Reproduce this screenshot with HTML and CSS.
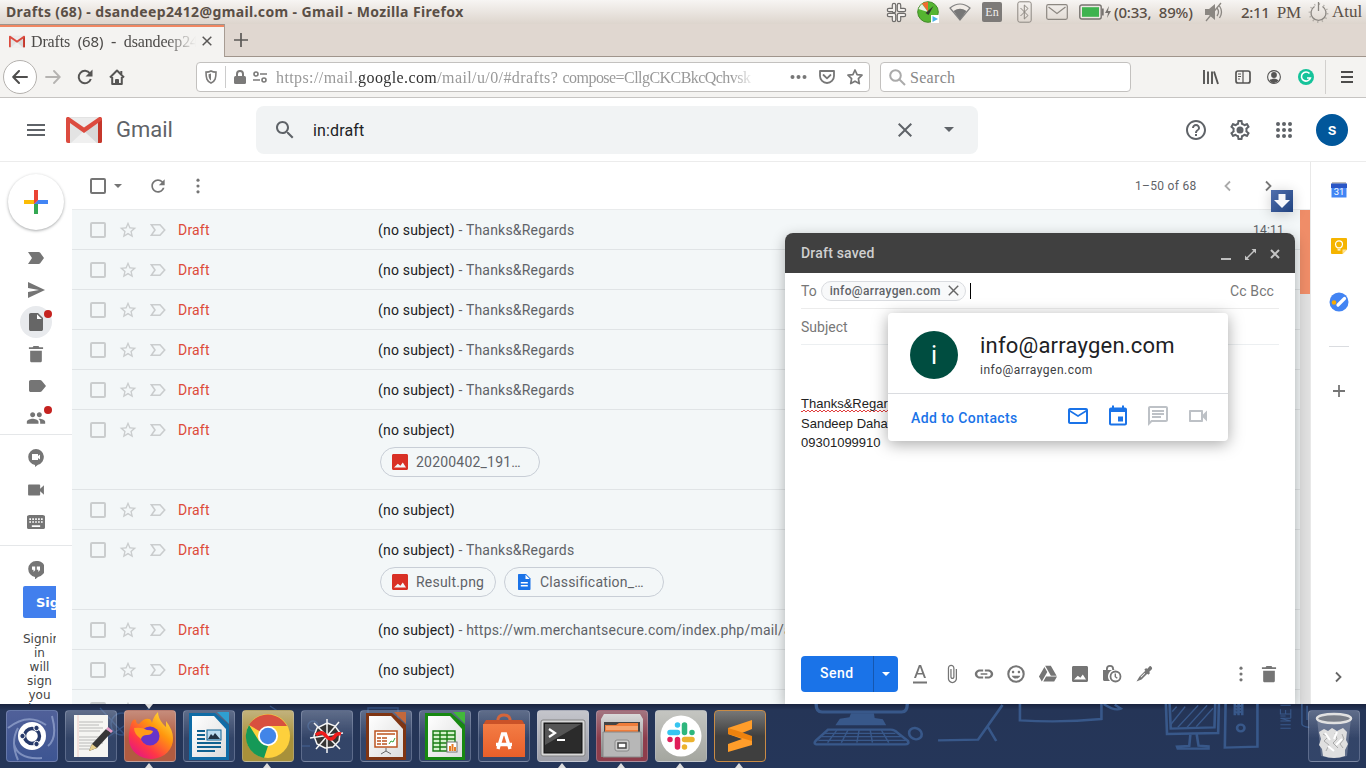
FILE: index.html
```html
<!DOCTYPE html>
<html lang="en">
<head>
<meta charset="utf-8">
<title>Drafts (68) - dsandeep2412@gmail.com - Gmail</title>
<link rel="stylesheet" href="styles.css">
</head>
<body>
<svg class="defs" width="0" height="0">
  <defs>
    <symbol id="star" viewBox="0 0 24 24"><path d="M22 9.24l-7.19-.62L12 2 9.19 8.63 2 9.24l5.46 4.73L5.82 21 12 17.27 18.18 21l-1.63-7.03L22 9.24zM12 15.4l-3.76 2.27 1-4.28-3.32-2.88 4.38-.38L12 6.1l1.71 4.04 4.38.38-3.32 2.88 1 4.28L12 15.4z"/></symbol>
    <symbol id="imp" viewBox="0 0 16 16"><path d="M1.3 2.7H10L14.7 8 10 13.3H1.3L5 8z" fill="none" stroke="currentColor" stroke-width="1.6"/></symbol>
    <symbol id="box" viewBox="0 0 16 16"><rect x="1" y="1" width="14" height="14" rx="1" fill="none" stroke="currentColor" stroke-width="2"/></symbol>
    <symbol id="search" viewBox="0 0 24 24"><path d="M15.5 14h-.79l-.28-.27C15.41 12.59 16 11.11 16 9.5 16 5.91 13.09 3 9.5 3S3 5.91 3 9.5 5.91 16 9.5 16c1.61 0 3.09-.59 4.23-1.57l.27.28v.79l5 4.99L20.49 19l-4.99-5zm-6 0C7.01 14 5 11.99 5 9.5S7.01 5 9.5 5 14 7.01 14 9.5 11.99 14 9.5 14z"/></symbol>
    <symbol id="close" viewBox="0 0 24 24"><path d="M19 6.41L17.59 5 12 10.59 6.41 5 5 6.41 10.59 12 5 17.59 6.41 19 12 13.41 17.59 19 19 17.59 13.41 12z"/></symbol>
    <symbol id="refresh" viewBox="0 0 24 24"><path d="M17.65 6.35C16.2 4.9 14.21 4 12 4c-4.42 0-7.99 3.58-7.99 8s3.57 8 7.99 8c3.73 0 6.84-2.55 7.73-6h-2.08c-.82 2.33-3.04 4-5.65 4-3.31 0-6-2.69-6-6s2.69-6 6-6c1.66 0 3.14.69 4.22 1.78L13 11h7V4l-2.35 2.35z"/></symbol>
    <symbol id="dots" viewBox="0 0 24 24"><circle cx="12" cy="5" r="1.9"/><circle cx="12" cy="12" r="1.9"/><circle cx="12" cy="19" r="1.9"/></symbol>
    <symbol id="trash" viewBox="0 0 24 24"><path d="M5 8h14v12c0 1.100-.9 2-2 2H7c-1.100 0-2-.9-2-2zM3.500 4H8l1-1.500h6L16 4h4.500v2h-17z"/></symbol>
    <symbol id="video" viewBox="0 0 24 24"><path d="M17 10.5V6c0-.6-.4-1-1-1H3.500c-.6 0-1 .4-1 1v12c0 .6.4 1 1 1H16c.6 0 1-.4 1-1v-4.500l4.500 4.500V6z"/></symbol>
    <symbol id="pic" viewBox="0 0 16 16"><path d="M1.500 0h13C15.400 0 16 .6 16 1.500v13c0 .9-.6 1.500-1.500 1.500h-13C.6 16 0 15.400 0 14.500v-13C0 .6.6 0 1.500 0zM2 13.500h12l-3.200-5-2.400 3.200-2.600-2z" fill-rule="evenodd"/></symbol>
    <symbol id="gmail" viewBox="0 0 36 26"><rect width="36" height="26" rx="2" fill="#e3e3e3"/><path d="M5 26L18 14 31 26z" fill="#f0f0f0"/><path d="M18 14l13 12h3V5z" fill="#d9d9d9"/><path d="M4 1h28L18 12z" fill="#ececec"/><path d="M0 2v22a2 2 0 002 2h2V6L18 16 32 6V26h2a2 2 0 002-2V2c0-2-2-2.500-3.500-1.500L18 10.500 3.500.5C2 -.5 0 0 0 2z" fill="#dc4b3f"/><path d="M32 6L36 3v21a2 2 0 01-2 2h-2z" fill="#c5372b"/></symbol>
    <symbol id="chevron" viewBox="0 0 12 12"><path d="M4 1.500L8.500 6 4 10.500" fill="none" stroke="currentColor" stroke-width="1.800"/></symbol>
    <linearGradient id="ff" x1="1" y1="0" x2="0.2" y2="1"><stop offset="0" stop-color="#fff44f"/><stop offset=".4" stop-color="#ff980e"/><stop offset=".75" stop-color="#ff3647"/><stop offset="1" stop-color="#e31587"/></linearGradient>
    <linearGradient id="bag" x1="0" y1="0" x2="0" y2="1"><stop offset="0" stop-color="#f37c44"/><stop offset="1" stop-color="#e95f2a"/></linearGradient>
    <linearGradient id="metal" x1="0" y1="0" x2="0" y2="1"><stop offset="0" stop-color="#d9d9d9"/><stop offset="1" stop-color="#858585"/></linearGradient>
    <linearGradient id="paper" x1="0" y1="0" x2="1" y2="1"><stop offset="0" stop-color="#fff"/><stop offset="1" stop-color="#dcdcdc"/></linearGradient>
  </defs>
</svg>

<header class="titlebar">
  <span class="wintitle">Drafts (68) - dsandeep2412@gmail.com - Gmail - Mozilla Firefox</span>
  <div class="tray">
    <svg width="21" height="21" viewBox="0 0 21 21"><g stroke-linecap="round" fill="none"><path d="M8 3v6M13 3v5M3 8h5M13 8h5M3 13h5M13 13h5M8 13v5M13 13v5" stroke="#6f6d6b" stroke-width="4.600"/><path d="M8 3v6M13 3v5M3 8h5M13 8h5M3 13h5M13 13h5M8 13v5M13 13v5" stroke="#f3f0ed" stroke-width="2.200"/></g></svg>
    <svg class="t-gauge" width="22" height="22" viewBox="0 0 22 22"><circle cx="11" cy="11" r="10.300" fill="#55b531" stroke="#448b2b"/><path d="M11 11L5 2.500A10 10 0 0111 1z" fill="#f26a30"/><path d="M11 11L1.500 8A10 10 0 015 3z" fill="#e7efe3"/><path d="M8.500 12l8-7-5 9z" fill="#303c2c"/><path d="M14 14h8v8h-8z" fill="#fff"/><path d="M15.500 15l5.500 3-5.500 3z" fill="#4bb3e8"/></svg>
    <svg class="t-wifi" width="22" height="20" viewBox="0 0 22 20"><path d="M1 6Q11-2 21 6L11 18z" fill="#f1ece7" stroke="#828282" stroke-width="1.200"/><path d="M4.500 9Q11 4.500 17.500 9L11 18z" fill="#777"/></svg>
    <span class="t-lang">En</span>
    <svg class="t-bt" width="15" height="22" viewBox="0 0 15 22" fill="none" stroke="#8c8781"><rect x=".8" y=".8" width="13.400" height="20.400" rx="2"/><path d="M3.500 7l7.500 7.500-3.700 3.500V4L11 7.500 3.500 15"/></svg>
    <svg class="t-mail" width="22" height="16" viewBox="0 0 22 16" fill="none" stroke="#8c8781" stroke-width="1.200"><rect x=".7" y=".7" width="20.600" height="14.600" rx="1.500"/><path d="M2.500 3L11 9.500 19.500 3"/></svg>
    <svg class="t-bat" width="33" height="16" viewBox="0 0 33 16"><rect x=".8" y="1" width="21.400" height="14" rx="2" fill="#eee9e4" stroke="#77736f" stroke-width="1.400"/><rect x="3" y="3.200" width="17" height="9.600" fill="#3eb34f"/><path d="M23 4.500h1.700v7H23zM30 2l-4 7h3l-1 5 4-7h-3z" fill="#77736f"/></svg>
    <span class="t-text t-pct">(0:33,&nbsp; 89%)</span>
    <svg class="t-vol" width="20" height="20" viewBox="0 0 20 20"><path d="M1 7h4l6-5v16l-6-5H1z" fill="#8b8782"/><path d="M13 6q3 4 0 8M15.500 4q4 6 0 12M17 1L2 19" fill="none" stroke="#8b8782" stroke-width="1.300"/></svg>
    <span class="t-text t-clock">2:11 &nbsp;<span class="serif">PM</span></span>
    <svg class="t-power" width="21" height="21" viewBox="0 0 21 21" fill="none" stroke="#8b8782" stroke-width="1.300"><path d="M6.500 4.500a7.500 7.500 0 108 0M10.500 0v9"/><circle cx="10.500" cy="11" r="9" stroke-dasharray="1.300 3.400" stroke-width="1.800" pathLength="56" opacity=".55"/></svg>
    <span class="serif t-user">Atul</span>
  </div>
</header>

<div class="tabstrip">
  <div class="tab">
    <svg width="16" height="13"><use href="#gmail"/></svg>
    <span class="tablabel serif">Drafts <b>&nbsp;(68)</b> &nbsp;-&nbsp; dsandeep24</span>
    <svg class="tabx" width="10" height="10" viewBox="0 0 10 10"><path d="M.7.7l8.600 8.600M9.300.7L.7 9.300" stroke="#595756" stroke-width="1.500"/></svg>
  </div>
  <div class="newtab"><svg width="14" height="14" viewBox="0 0 14 14"><path d="M7 0v14M0 7h14" stroke="#5b5956" stroke-width="1.700"/></svg></div>
</div>

<div class="navbar">
  <div class="back"><svg width="16" height="14" viewBox="0 0 16 14" fill="none" stroke="#4f4e4d" stroke-width="2" stroke-linecap="round" stroke-linejoin="round"><path d="M15 7H1.500M7 1L1.200 7 7 13"/></svg></div>
  <svg class="fwd" width="16" height="14" viewBox="0 0 16 14" fill="none" stroke="#b5b3b1" stroke-width="1.800" stroke-linecap="round"><path d="M1 7h13.500M9 1l5.800 6L9 13"/></svg>
  <svg class="reload" width="16" height="16" viewBox="0 0 16 16"><path d="M13 4.500A6.200 6.200 0 1013.800 10" fill="none" stroke="#565554" stroke-width="2"/><path d="M15.500.5v7H8.500z" fill="#565554"/></svg>
  <svg class="home" width="16" height="16" viewBox="0 0 16 16" fill="none" stroke="#565554" stroke-width="2" stroke-linejoin="round"><path d="M1 8.500L8 1.500l7 7M3.200 8v7h9.600V8"/><path d="M7 15v-4h2v4M12.300 2v3" /></svg>
  <div class="urlbar">
    <svg width="12" height="14" viewBox="0 0 12 14"><path d="M6 1c1.500.8 3 1.100 5 1.100 0 6-.7 9-5 11-4.300-2-5-5-5-11C3 2.100 4.500 1.800 6 1z" fill="none" stroke="#7b7a79" stroke-width="1.600"/><path d="M6 3.500v7C4 9 3.500 7.500 3.500 4.200z" fill="#7b7a79"/></svg>
    <i class="urlsep"></i>
    <svg width="12" height="14" viewBox="0 0 12 14"><rect y="6" width="12" height="8" rx="1.500" fill="#7b7a79"/><path d="M3 7V4a3 3 0 016 0v3" fill="none" stroke="#7b7a79" stroke-width="2"/></svg>
    <svg class="perm" width="14" height="12" viewBox="0 0 14 12" fill="none" stroke="#7b7a79" stroke-width="1.600"><circle cx="3" cy="3" r="2"/><circle cx="11" cy="9" r="2"/><path d="M7 3h7M0 9h7"/></svg>
    <div class="url serif">https://mail.<span>google.com</span>/mail/u/0/#drafts? <em>compose=CllgCKCBkcQchvsk</em></div>
    <svg class="urldots" width="17" height="6" viewBox="0 0 17 6" fill="#777"><circle cx="2.500" cy="3" r="2"/><circle cx="8.500" cy="3" r="2"/><circle cx="14.500" cy="3" r="2"/></svg>
    <svg width="16" height="14" viewBox="0 0 16 14" fill="none" stroke="#777" stroke-width="1.800" stroke-linejoin="round"><path d="M1 1h14v5a7 7 0 01-14 0z"/><path d="M4.500 5L8 8.300 11.500 5" stroke-linecap="round"/></svg>
    <svg class="bm" width="16" height="16" viewBox="0 0 16 16" fill="none" stroke="#777" stroke-width="1.700" stroke-linejoin="round"><path d="M8 1l2.100 4.600 4.900.6-3.600 3.400.9 5L8 12.200 3.700 14.600l.9-5L1 6.200l4.900-.6z"/></svg>
  </div>
  <div class="searchbar"><svg width="17" height="17" viewBox="0 0 17 17" fill="none" stroke="#aaa" stroke-width="2"><circle cx="6.500" cy="6.500" r="5.300"/><path d="M10.500 10.500L16 16"/></svg><span class="serif">Search</span></div>
  <div class="navicons">
    <svg width="16" height="15" viewBox="0 0 16 15" stroke="#565554" stroke-width="1.900"><path d="M1 0v14M5 1.500V14M9 1.500V14M11 1.500L15 14"/></svg>
    <svg width="16" height="14" viewBox="0 0 16 14" fill="none" stroke="#565554" stroke-width="1.700"><rect x="1" y="1" width="14" height="12" rx="2"/><path d="M8 1v12M3 4h3M3 6.500h3M3 9h2" stroke-width="1.200"/></svg>
    <svg width="14" height="14" viewBox="0 0 14 14"><circle cx="7" cy="7" r="6.400" fill="none" stroke="#565554" stroke-width="1.100"/><circle cx="7" cy="5" r="2.900" fill="#565554"/><path d="M2.500 10.300Q7 6.500 11.500 10.300A5 5 0 012.500 10.300z" fill="#565554"/></svg>
    <svg width="16" height="16" viewBox="0 0 16 16"><circle cx="8" cy="8" r="8" fill="#15c39a"/><path d="M11.500 4.500a4.600 4.600 0 10.900 4.500H9" fill="none" stroke="#fff" stroke-width="1.600"/></svg>
  </div>
  <i class="navsep"></i>
  <svg class="burger" width="12" height="12" viewBox="0 0 12 12"><path d="M0 1h12M0 6h12M0 11h12" stroke="#4d4c4b" stroke-width="1.800"/></svg>
</div>

<div class="ghead">
  <svg class="gmenu" width="18" height="12" viewBox="0 0 18 12" fill="#5f6368"><path d="M0 0h18v2H0zM0 5h18v2H0zM0 10h18v2H0z"/></svg>
  <svg class="glogo" width="36" height="26"><use href="#gmail"/></svg>
  <span class="gname">Gmail</span>
  <div class="gsearch">
    <svg width="24" height="24"><use href="#search"/></svg>
    <span>in:draft</span>
    <svg class="gx" width="24" height="24"><use href="#close"/></svg>
    <i class="caret"></i>
  </div>
  <div class="gicons">
    <svg width="24" height="24" viewBox="0 0 24 24"><path d="M11 18h2v-2h-2v2zm1-16C6.480 2 2 6.480 2 12s4.480 10 10 10 10-4.480 10-10S17.520 2 12 2zm0 18c-4.410 0-8-3.590-8-8s3.590-8 8-8 8 3.590 8 8-3.590 8-8 8zm0-14c-2.210 0-4 1.790-4 4h2c0-1.100.9-2 2-2s2 .9 2 2c0 2-3 1.750-3 5h2c0-2.250 3-2.500 3-5 0-2.210-1.790-4-4-4z"/></svg>
    <svg width="24" height="24" viewBox="0 0 24 24"><path fill-rule="evenodd" d="M19.430 12.980c.04-.32.07-.64.07-.98 0-.34-.03-.66-.07-.98l2.110-1.650c.19-.15.24-.42.12-.64l-2-3.460c-.09-.16-.26-.25-.44-.25-.06 0-.12.01-.17.03l-2.490 1c-.52-.4-1.080-.73-1.690-.98l-.38-2.650C14.460 2.180 14.250 2 14 2h-4c-.25 0-.46.18-.49.42l-.38 2.650c-.61.25-1.170.59-1.690.98l-2.490-1c-.06-.02-.12-.03-.18-.03-.17 0-.34.09-.43.25l-2 3.460c-.13.22-.07.49.12.64l2.110 1.650c-.04.32-.07.65-.07.98 0 .33.03.66.07.98l-2.110 1.650c-.19.15-.24.42-.12.64l2 3.460c.09.16.26.25.44.25.06 0 .12-.01.17-.03l2.490-1c.52.4 1.080.73 1.690.98l.38 2.650c.03.24.24.42.49.42h4c.25 0 .46-.18.49-.42l.38-2.650c.61-.25 1.170-.59 1.690-.98l2.490 1c.06.02.12.03.18.03.17 0 .34-.09.43-.25l2-3.460c.12-.22.07-.49-.12-.64l-2.110-1.650zm-1.980-1.710c.04.31.05.52.05.73 0 .21-.02.43-.05.73l-.14 1.130.89.7 1.080.84-.7 1.210-1.270-.51-1.040-.42-.9.68c-.43.32-.84.56-1.250.73l-1.060.43-.16 1.130-.2 1.350h-1.400l-.19-1.350-.16-1.130-1.060-.43c-.43-.18-.83-.41-1.230-.71l-.91-.7-1.060.43-1.270.51-.7-1.210 1.080-.84.89-.7-.14-1.130c-.03-.31-.05-.54-.05-.74s.02-.43.05-.73l.14-1.130-.89-.7-1.080-.84.7-1.210 1.270.51 1.040.42.9-.68c.43-.32.84-.56 1.250-.73l1.060-.43.16-1.130.2-1.350h1.390l.19 1.350.16 1.130 1.060.43c.43.18.83.41 1.230.71l.91.7 1.060-.43 1.270-.51.7 1.210-1.070.85-.89.7.14 1.130z"/><circle cx="12" cy="12" r="3.500"/></svg>
    <svg width="24" height="24" viewBox="0 0 24 24"><path d="M6 6h.01M12 6h.01M18 6h.01M6 12h.01M12 12h.01M18 12h.01M6 18h.01M12 18h.01M18 18h.01" stroke="#5f6368" stroke-width="4" stroke-linecap="round"/></svg>
  </div>
  <div class="account">s</div>
</div>

<div class="gmain">
  <nav class="rail">
    <div class="plus"><svg width="24" height="24" viewBox="0 0 24 24"><path fill="#ea4335" d="M10 0h4v10l-4 4z"/><path fill="#4285f4" d="M14 10h10v4H10z"/><path fill="#34a853" d="M10 14h4v10h-4z"/><path fill="#fbbc05" d="M0 10h10v4H0z"/><path fill="#ea4335" d="M10 10h4l-4 4z"/></svg></div>
    <div class="ri"><svg width="16" height="12" viewBox="0 0 16 12"><path d="M0 0h10.500c.8 0 1.300.3 1.700.8L16 6l-3.800 5.200c-.4.5-.9.800-1.700.8H0l4-6z"/></svg></div>
    <div class="ri"><svg width="17" height="16" viewBox="0 0 17 16"><path d="M0 16l17-8L0 0v6l11 2-11 2z"/></svg></div>
    <div class="ri active"><svg width="14" height="18" viewBox="0 0 14 18"><path d="M1.800 0H9l5 5v11.200c0 1-.8 1.800-1.800 1.800H1.800C.8 18 0 17.200 0 16.200V1.800C0 .8.8 0 1.800 0z"/><path d="M8 1.200V6h4.800z" fill="#fff"/></svg><i class="reddot"></i></div>
    <div class="ri"><svg width="20" height="20"><use href="#trash"/></svg></div>
    <div class="ri"><svg class="label" width="17" height="12" viewBox="0 0 17 12"><path d="M1.800 0H11c.8 0 1.300.3 1.700.8L17 6l-4.300 5.200c-.4.5-.9.800-1.700.8H1.800C.8 12 0 11.200 0 10.200V1.800C0 .8.8 0 1.800 0z"/></svg></div>
    <div class="ri"><svg width="20" height="20" viewBox="0 0 24 24"><path d="M16 11c1.660 0 2.990-1.340 2.990-3S17.660 5 16 5c-1.660 0-3 1.340-3 3s1.340 3 3 3zm-8 0c1.660 0 2.990-1.340 2.990-3S9.660 5 8 5C6.340 5 5 6.340 5 8s1.340 3 3 3zm0 2c-2.330 0-7 1.170-7 3.500V19h14v-2.500c0-2.330-4.670-3.500-7-3.500zm8 0c-.29 0-.62.02-.97.05 1.160.84 1.970 1.970 1.970 3.450V19h6v-2.500c0-2.330-4.670-3.500-7-3.500z"/></svg><i class="reddot"></i></div>
    <hr>
    <div class="ri r1"><svg width="16" height="18" viewBox="0 0 16 18"><path d="M8 0a8 8 0 00-1 15.900V18l3-2.300A8 8 0 008 0z"/><path d="M4 5h6v2l2-1.500v5L10 9v2H4z" fill="#fff"/></svg></div>
    <div class="ri"><svg width="20" height="16" viewBox="0 2 24 20" preserveAspectRatio="none"><use href="#video" width="24" height="24"/></svg></div>
    <div class="ri"><svg width="20" height="20" viewBox="0 0 24 24"><path d="M20 3.500H4c-1.100 0-2.800.9-2.800 2V18.500c0 1.100.9 2 2.800 2h16c1.600 0 2.800-.9 2.800-2V5.500c0-1.100-1.200-2-2.800-2zm-9 4h2v2h-2zm0 3.500h2v2h-2zM7.500 7.500h2v2h-2zm0 3.500h2v2h-2zM6 13H4v-2h2zm0-3.500H4v-2h2zm11 8.500H7v-2h10zm-.5-5h-2v-2h2zm0-3.500h-2v-2h2zm3.500 3.500h-2v-2h2zm0-3.500h-2v-2h2z"/></svg></div>
    <hr class="h2">
    <div class="ri r2"><svg width="16" height="18" viewBox="0 0 16 18"><path d="M8 0a8 8 0 00-1 15.900V18.500l3-2.600A8 8 0 008 0z"/><path d="M4 5.500h3.200V9L5.500 11V8.700H4zM8.800 5.500H12V9l-1.700 2V8.700H8.800z" fill="#fff"/></svg></div>
    <div class="signin"><div class="sigbtn">Sign in</div><p>Signing<br>in<br>will<br>sign<br>you<br>into</p></div>
  </nav>

  <section class="list">
    <div class="ltools">
      <svg class="c1" width="16" height="16"><use href="#box"/></svg><i class="caret small"></i>
      <svg class="c2" width="20" height="20"><use href="#refresh"/></svg>
      <svg class="c3" width="20" height="20"><use href="#dots"/></svg>
      <span class="count">1–50 of 68</span>
      <svg class="prev" width="12" height="12"><use href="#chevron"/></svg>
      <svg class="next" width="12" height="12"><use href="#chevron"/></svg>
    </div>
    <div class="lbody">
      <div class="rows">
        <div class="row"><svg class="k"><use href="#box"/></svg><svg class="s"><use href="#star"/></svg><svg class="m"><use href="#imp"/></svg><span class="from">Draft</span><div class="subj">(no subject)<span> - Thanks&amp;Regards</span></div><span class="time">14:11</span></div>
        <div class="row"><svg class="k"><use href="#box"/></svg><svg class="s"><use href="#star"/></svg><svg class="m"><use href="#imp"/></svg><span class="from">Draft</span><div class="subj">(no subject)<span> - Thanks&amp;Regards</span></div></div>
        <div class="row"><svg class="k"><use href="#box"/></svg><svg class="s"><use href="#star"/></svg><svg class="m"><use href="#imp"/></svg><span class="from">Draft</span><div class="subj">(no subject)<span> - Thanks&amp;Regards</span></div></div>
        <div class="row"><svg class="k"><use href="#box"/></svg><svg class="s"><use href="#star"/></svg><svg class="m"><use href="#imp"/></svg><span class="from">Draft</span><div class="subj">(no subject)<span> - Thanks&amp;Regards</span></div></div>
        <div class="row"><svg class="k"><use href="#box"/></svg><svg class="s"><use href="#star"/></svg><svg class="m"><use href="#imp"/></svg><span class="from">Draft</span><div class="subj">(no subject)<span> - Thanks&amp;Regards</span></div></div>
        <div class="row tall"><svg class="k"><use href="#box"/></svg><svg class="s"><use href="#star"/></svg><svg class="m"><use href="#imp"/></svg><span class="from">Draft</span><div class="subj">(no subject)<div class="chips"><div class="chip w160"><svg width="16" height="16" fill="#d93025"><use href="#pic"/></svg>20200402_191…</div></div></div></div>
        <div class="row"><svg class="k"><use href="#box"/></svg><svg class="s"><use href="#star"/></svg><svg class="m"><use href="#imp"/></svg><span class="from">Draft</span><div class="subj">(no subject)</div></div>
        <div class="row tall"><svg class="k"><use href="#box"/></svg><svg class="s"><use href="#star"/></svg><svg class="m"><use href="#imp"/></svg><span class="from">Draft</span><div class="subj">(no subject)<span> - Thanks&amp;Regards</span><div class="chips"><div class="chip w116"><svg width="16" height="16" fill="#d93025"><use href="#pic"/></svg>Result.png</div><div class="chip w160"><svg width="16" height="16" viewBox="0 0 16 16"><path d="M3 0h7l4.500 4.500V15c0 .6-.4 1-1 1H3c-.6 0-1-.4-1-1V1c0-.6.4-1 1-1z" fill="#1a73e8"/><path d="M9.500.8V5h4.200zM4.800 8h7v1.400h-7zM4.800 11h7v1.400h-7z" fill="#fff"/></svg>Classification_…</div></div></div></div>
        <div class="row"><svg class="k"><use href="#box"/></svg><svg class="s"><use href="#star"/></svg><svg class="m"><use href="#imp"/></svg><span class="from">Draft</span><div class="subj">(no subject)<span> - https://wm.merchantsecure.com/index.php/mail/auth</span></div></div>
        <div class="row"><svg class="k"><use href="#box"/></svg><svg class="s"><use href="#star"/></svg><svg class="m"><use href="#imp"/></svg><span class="from">Draft</span><div class="subj">(no subject)</div></div>
        <div class="row"><svg class="k"><use href="#box"/></svg><svg class="s"><use href="#star"/></svg><svg class="m"><use href="#imp"/></svg></div>
      </div>
      <div class="scroll"><i></i></div>
    </div>
  </section>

  <aside class="side">
    <svg width="16" height="16" viewBox="0 0 16 16"><path d="M1 0h14v3H1z" fill="#bdbdbd"/><path d="M0 1.500h16V6H0z" fill="#2a56c6"/><path d="M.5 6h15v9.500H.5z" fill="#4285f4"/><text x="8" y="12.500" class="caltext">31</text></svg>
    <svg width="16" height="16" viewBox="0 0 16 16"><path d="M1 0h14a1 1 0 011 1v10.500L11.500 16H1a1 1 0 01-1-1V1a1 1 0 011-1z" fill="#f5b400"/><path d="M16 11.500h-4.500V16z" fill="#fde293"/><path d="M6.500 9.800Q4.500 8.500 4.500 6.300a3.500 3.500 0 017 0q0 2.200-2 3.500zM6.600 11.800h2.800" fill="none" stroke="#fff" stroke-width="1.200"/></svg>
    <svg width="20" height="20" viewBox="0 0 20 20"><circle cx="10" cy="10" r="9.500" fill="#4284f3"/><path d="M9 13L15.500 6.500" stroke="#fff" stroke-width="3.200" stroke-linecap="round"/><circle cx="5" cy="10.500" r="2.300" fill="#f9ab00"/></svg>
    <i class="sideline"></i>
    <svg class="addon" width="12" height="12" viewBox="0 0 12 12"><path d="M6 0v12M0 6h12" stroke="#757575" stroke-width="1.800"/></svg>
    <svg class="sidechev" width="12" height="12"><use href="#chevron"/></svg>
  </aside>
</div>

<div class="compose">
  <div class="chead"><span>Draft saved</span>
    <svg width="10" height="12" viewBox="0 0 10 12"><path d="M0 11h10" stroke="#bfbfbf" stroke-width="2"/></svg>
    <svg width="11" height="11" viewBox="0 0 11 11" fill="#c4c4c4"><path d="M6.500 0H11v4.500zM0 6.500V11h4.500z"/><path d="M2 9L9 2" stroke="#c4c4c4" stroke-width="1.400"/></svg>
    <svg width="10" height="10" viewBox="0 0 10 10"><path d="M1 1l8 8M9 1L1 9" stroke="#c4c4c4" stroke-width="2"/></svg>
  </div>
  <div class="cto"><span>To</span><div class="pill">info@arraygen.com<svg width="11" height="11" viewBox="0 0 10 10"><path d="M.7.7l8.600 8.600M9.300.7L.7 9.300" stroke="#666" stroke-width="1.300"/></svg></div><i class="cursor"></i><span class="cc">Cc Bcc</span></div>
  <div class="csub">Subject</div>
  <div class="cbody"><p><span class="spell">Thanks&amp;Regards</span></p><p>Sandeep Dahatonde</p><p>09301099910</p></div>
  <div class="cfoot">
    <div class="send"><span>Send</span><i class="split"><i class="caret white"></i></i></div>
    <div class="ctools">
      <svg viewBox="0 0 20 20"><path d="M3 17.500h14v2H3zM8.900 1h2.200L16 14h-2l-1.300-3.500H7.300L6 14H4zM10 3L7.900 9h4.200z" fill-rule="evenodd"/></svg>
      <svg viewBox="0 0 24 24"><path d="M16.500 6v11.500c0 2.210-1.790 4-4 4s-4-1.790-4-4V5c0-1.380 1.120-2.500 2.500-2.500s2.500 1.120 2.500 2.500v10.500c0 .55-.45 1-1 1s-1-.45-1-1V6H10v9.500c0 1.380 1.120 2.500 2.500 2.500s2.500-1.120 2.500-2.500V5c0-2.210-1.790-4-4-4S7 2.790 7 5v12.500c0 3.040 2.460 5.500 5.500 5.500s5.500-2.460 5.500-5.500V6h-1.500z"/></svg>
      <svg viewBox="0 0 24 24"><path d="M3.900 12c0-1.710 1.390-3.100 3.100-3.100h4V6.500H7C4.240 6.500 1 8.740 1 12s3.240 5.500 6 5.500h4v-2.400H7c-1.710 0-3.100-1.390-3.100-3.100zM8 13h8v-2H8zm9-6.500h-4v2.400h4c1.710 0 3.100 1.390 3.100 3.100s-1.390 3.100-3.100 3.100h-4v2.400h4c2.760 0 6-2.240 6-5.500s-3.240-5.500-6-5.500z"/></svg>
      <svg viewBox="0 0 24 24"><path d="M12 1.500a10.500 10.500 0 100 21 10.500 10.500 0 000-21zM12 20a8 8 0 110-16 8 8 0 010 16zm3.500-9c.83 0 1.500-.67 1.500-1.500S16.330 8 15.500 8 14 8.670 14 9.500s.67 1.500 1.500 1.500zm-7 0c.83 0 1.500-.67 1.500-1.500S9.330 8 8.500 8 7 8.670 7 9.500 7.670 11 8.500 11zm3.500 6.500c2.330 0 4.310-1.460 5.110-3.500H6.890c.8 2.040 2.780 3.500 5.110 3.500z"/></svg>
      <svg viewBox="0 0 24 24"><path d="M7.710 3.500L1.150 15l3.430 6 6.550-11.500zM9.730 15L6.300 21h13.120l3.430-6zM22.280 14L15.420 2H8.580l6.860 12z"/></svg>
      <svg viewBox="-2 -2 20 20"><use href="#pic" width="16" height="16"/></svg>
      <svg viewBox="0 0 20 20"><path d="M1 6h3V5a4 4 0 018 0v1h2a6.500 6.500 0 00-6 11H2.500C1.700 17 1 16.300 1 15.500zm4.800 0h4.400V5a2.200 2.200 0 00-4.400 0z" fill-rule="evenodd"/><circle cx="13.500" cy="12.500" r="5" fill="none" stroke="#757575" stroke-width="1.800"/><path d="M13.300 9.500v3.200l2 1.500" fill="none" stroke="#757575" stroke-width="1.400"/></svg>
      <svg viewBox="0 0 20 20"><path d="M17.300 2.700c1.100 1.100 1 2 .3 2.700l-2.500 2.500 1 1-1.800 1.800-1-1-5.800 5.800L2.500 17.500 5.500 12.500l5.800-5.800-1-1 1.800-1.800 1 1 2.300-2.300c.8-.8 1.300-.5 1.900.1zM10.500 9l-4 4 .6.6 4-4z" fill-rule="evenodd"/></svg>
    </div>
    <svg class="cdots" width="20" height="20"><use href="#dots"/></svg>
    <svg width="20" height="20"><use href="#trash"/></svg>
  </div>
</div>

<div class="card">
  <div class="ctop"><div class="avatar">i</div><div><div class="cname">info@arraygen.com</div><div class="cmail">info@arraygen.com</div></div></div>
  <div class="cact"><span>Add to Contacts</span>
    <svg viewBox="0 0 24 24"><path d="M22 6c0-1.100-.9-2-2-2H4c-1.100 0-2 .9-2 2v12c0 1.100.9 2 2 2h16c1.100 0 2-.9 2-2V6zm-2 0l-8 5-8-5h16zm0 12H4V8l8 5 8-5v10z"/></svg>
    <svg viewBox="0 0 24 24"><path d="M19 3.500h-1v-2h-2v2H8v-2H6v2H5c-1.100 0-2 .9-2 2V19.500c0 1.100.9 2 2 2h14c1.100 0 2-.9 2-2V5.500c0-1.100-.9-2-2-2zm0 16H5V8h14zM12 12.500h5v5h-5z" fill-rule="evenodd"/></svg>
    <svg class="off" viewBox="0 0 24 24"><path d="M4 4h16v12H5.170L4 17.170V4m0-2c-1.100 0-1.990.9-1.990 2L2 22l4-4h14c1.100 0 2-.9 2-2V4c0-1.100-.9-2-2-2H4zm2 10h9v2H6v-2zm0-3h12v2H6V9zm0-3h12v2H6V6z"/></svg>
    <svg class="off" viewBox="0 0 24 24"><path d="M15 8v8H5V8h10m1-2H4c-.55 0-1 .45-1 1v10c0 .55.450 1 1 1h12c.55 0 1-.45 1-1v-3.500l4 4v-11l-4 4V7c0-.55-.45-1-1-1z"/></svg>
  </div>
</div>

<div class="dlbadge"><svg width="16" height="16" viewBox="0 0 16 16"><path d="M4.500 1h7v6H16l-8 8-8-8h4.500z" fill="#f6f7fb"/></svg></div>

<footer class="dock">
  <svg class="doodles" width="581" height="64" viewBox="0 192 1568 192" preserveAspectRatio="none" fill="none" stroke="#38588a" stroke-width="7">
    <path d="M84 192q0 24 16 24h215q15 0 15-24" stroke-width="9"/><path d="M178 220h62l2 14 22 4 9 18H136l12-20 26-4z" fill="#38588a" stroke="none"/><path d="M116 269h170q10 0 18 10l28 24q4 10-8 10H84q-8-2 0-12z"/><path d="M108 280h190M98 290h215M90 301h236M140 270l-25 38M170 270l-18 38M200 270l-6 38M230 270l6 38M260 270l20 38" stroke-width="4"/><ellipse cx="352" cy="281" rx="16" ry="18" transform="rotate(-45 352 281)"/>
    <path d="M413 301l108-2 66-104M546 258l24 45M634 192v49q110 8 220-4V192" stroke-width="7"/><path d="M860 192q30 22 46 14l-16-12"/>
    <path d="M1028 192l3 90 138-3 2-87M1038 192l3 74 118-4 2-70"/><path d="M1040 255l40-55M1060 262l55-66M1085 262l54-66M1110 260l45-55M1045 215l12-15" stroke-width="4"/><path d="M1094 284l-3 34-33 2 2 6h83v-7l-27-2-5-35"/><path d="M1189 192l-2 131 88-3V192M1212 200l23-3M1212 209l23-3M1212 218l23-3M1214 192v34M1224 192v34M1234 192v34"/><circle cx="1230" cy="264" r="10"/><path d="M1337 265h28M1337 254h28M1337 243h28l-28-8h28M1351 228h-14M1365 235v-14M1337 208v14h28v-14M1351 222v-12M1337 196h28" stroke-width="3"/><path d="M1395 192v60q1 8 20 10M1409 197v43" stroke-width="4"/>
  </svg>
  <svg class="doodles left" width="800" height="64" viewBox="0 0 800 64" fill="none" stroke="#334f7d" stroke-width="1.500"><circle cx="122" cy="20" r="11"/><path d="M100 4l50 54M150 4l-52 36M270 2l15 10M302 42h8"/><circle cx="313" cy="22" r="5"/><path d="M368 4h30v12h-30z"/></svg>
  <div class="tiles">
    <div class="tile dash"><svg viewBox="0 0 52 52"><g fill="none" stroke="#9fafd6" stroke-width="2" opacity=".65"><path d="M2 18Q22 2 40 15M46 6q6 22-4 30M8 34q4 16 28 14M12 50Q4 32 12 18"/></g><circle cx="26" cy="26" r="14" fill="#fff"/><circle cx="26" cy="26" r="7.500" fill="none" stroke="#26396a" stroke-width="3.400"/><g fill="#26396a" stroke="#fff"><circle cx="16.500" cy="26" r="2.700"/><circle cx="30.500" cy="18" r="2.700"/><circle cx="30.500" cy="34" r="2.700"/></g></svg></div>
    <div class="tile"><svg viewBox="0 0 52 52"><path d="M9 5h34v42H9z" fill="#f5f5f2"/><path d="M14 12h24M14 15h20M14 18h24M14 21h21M14 27h24M14 30h18M14 33h24M14 36h15M14 39h14" stroke="#aaa" stroke-width=".8"/><path d="M13 5v42" stroke="#eab0a8" stroke-width=".6"/><path d="M24 41l3-7 14-15 5 4-14 15z" fill="#373737"/><path d="M24 41l3-7 5 4z" fill="#e8d08c"/><path d="M41 19l2-2 5 4-2 2z" fill="#e39bc4"/></svg></div>
    <div class="tile red"><svg viewBox="0 0 52 52"><path d="M7 14Q9 8 12 10q0 4 3 4 5-6 10-5 2 0 3 4Q29 7 34 2q0 6 5 12l3 3V11q7 9 7 17a22 20 0 01-44 2Q4 24 7 14z" fill="url(#ff)"/><circle cx="26" cy="26" r="9.500" fill="#6734c9"/><path d="M10 18q8-1 13 2 4 0 6 1-1 4-6 4-5 0-6 4Q10 24 10 18z" fill="#ff9b19"/></svg></div>
    <div class="tile"><svg viewBox="0 0 52 52"><path d="M6 3h26l14 12v35H6z" fill="#0f6ca6"/><path d="M9 6h22l12 13v28H9z" fill="url(#paper)"/><path d="M34 2h12v12z" fill="#2f9fd0"/><path d="M14 21h8M14 25h8M14 29h8M14 33h24M14 37h24M14 41h18" stroke="#0f6190" stroke-width="1.800"/><rect x="24" y="20" width="14" height="10" fill="#bcdcf0" stroke="#0f6190"/><path d="M25 29l3-5 2 2 2-3 5 6z" fill="#234"/></svg></div>
    <div class="tile gold"><svg viewBox="0 0 52 52"><circle cx="26" cy="26" r="22" fill="#fdd03c"/><path d="M26 26L7 15A22 22 0 0145 16H26z" fill="#d8503f"/><path d="M7 15l10 16 9 5-4 12A22 22 0 017 15z" fill="#159957"/><circle cx="26" cy="26" r="10" fill="#fff"/><circle cx="26" cy="26" r="8.200" fill="#4285e8"/></svg></div>
    <div class="tile"><svg viewBox="0 0 52 52"><path d="M26 13l8 3 5 7-1 8-6 6-8 1-8-4-3-8 3-8z" fill="#353535"/><g fill="none" stroke="#f5f5f5" stroke-width="1.500"><path d="M26 9v34M13 13l26 26M9 28l33-5M15 39L38 12M26 13l8 3 5 7-1 8-6 6-8 1-8-4-3-8 3-8z"/></g><path d="M15 25q6-5 10 1 5 6 9 0 2-3 6-2" fill="none" stroke="#f01a1a" stroke-width="3.500"/></svg></div>
    <div class="tile"><svg viewBox="0 0 52 52"><path d="M6 3h26l14 12v35H6z" fill="#7f3513"/><path d="M9 6h22l12 13v28H9z" fill="url(#paper)"/><path d="M34 2h12v12z" fill="#c2683c"/><rect x="15" y="21" width="22" height="16" fill="#fff" stroke="#bc5420" stroke-width="1.500"/><path d="M17 24h18M17 28h4M17 31h4M17 34h4M22 28h5M22 31h5M22 34h5" stroke="#bc5420" stroke-width="1.700"/><path d="M29 34l2-3 2 1 2-4" stroke="#35a33a" fill="none"/><path d="M26 38v3l-5 3M26 41l5 3" stroke="#666" fill="none"/></svg></div>
    <div class="tile"><svg viewBox="0 0 52 52"><path d="M6 3h26l14 12v35H6z" fill="#178811"/><path d="M9 6h22l12 13v28H9z" fill="url(#paper)"/><path d="M34 2h12v12z" fill="#42b83a"/><path d="M14 21h22v20H14z" fill="#d5f2cc"/><path d="M14 21h22v20H14zM14 25h22M14 29h22M14 33h22M14 37h22M21 21v20M28 21v20" stroke="#187c13" fill="none" stroke-width="1.400"/><rect x="28" y="32" width="10" height="10" fill="#fff" stroke="#777"/><path d="M31 41v-5M33.500 41v-7M36 41v-4" stroke="#e57b22" stroke-width="2"/></svg></div>
    <div class="tile"><svg viewBox="0 0 52 52"><path d="M20 16V9q1-4 6-4t6 4v7" fill="none" stroke="#d5653a" stroke-width="3"/><path d="M8 10h36l3 5v32H5V15z" fill="#ca5228"/><path d="M5 14h42v33H5z" fill="url(#bag)"/><path d="M20 39l4.500-15h3L32 39M18 34.500h16" fill="none" stroke="#fff" stroke-width="3.300"/></svg></div>
    <div class="tile lt run"><svg viewBox="0 0 52 52"><rect x="4" y="10" width="44" height="36" rx="2" fill="#d7d7d7" stroke="#858585"/><rect x="7" y="13" width="38" height="30" fill="#2b2b2b" stroke="#111"/><path d="M8 14h36L8 35z" fill="#555"/><path d="M12 19l6 4-6 4M20 30h8" fill="none" stroke="#fff" stroke-width="2.200"/></svg></div>
    <div class="tile wine run"><svg viewBox="0 0 52 52"><path d="M8 4h36l3 5v38H5V9z" fill="url(#metal)"/><path d="M8 12h36v12H8z" fill="#444"/><path d="M9 15h11l3-2h19v10H9z" fill="#ef7d3b"/><path d="M10 17h32M10 19h32" stroke="#fbd0a9"/><path d="M7 22h38v25H7z" fill="#b7b7b7" stroke="#888"/><rect x="19" y="30" width="14" height="11" rx="2" fill="#ccc" stroke="#888"/><rect x="22" y="33" width="8" height="5" fill="#fff" stroke="#444" stroke-width="1.500"/></svg></div>
    <div class="tile grey run"><svg viewBox="0 0 52 52"><circle cx="26" cy="26" r="20.500" fill="#fff"/><g stroke-width="5.500" stroke-linecap="round"><path d="M22.500 15v.01M15 22.500h7.500" stroke="#36c5f0"/><path d="M29.500 15v7.500M37 22.500v.01" stroke="#2eb67d"/><path d="M15 29.500v.01M22.500 29.500V37" stroke="#e01e5a"/><path d="M29.500 29.500H37M29.500 37v.01" stroke="#ecb22e"/></g></svg></div>
    <div class="tile dark run"><svg viewBox="0 0 52 52"><path d="M14 18l24-8v9l-15 6 15 5v5l-24 7v-8l14-5-14-5z" fill="#ff9d2a"/><path d="M14 18v6l24 7v-5l-14-5z" fill="#ed820e"/></svg></div>
  </div>
  <div class="tile bin"><svg viewBox="0 0 52 52"><path d="M9 8l4 38q13 4 26 0l4-38z" fill="#99a2b5" opacity=".45"/><path d="M11 22l5-3 4 2 4-3 5 3 6-3 4 4-1 8 2 4-3 6v6q-11 4-22 0l-1-7-3-4 2-6z" fill="#dfdfdf"/><path d="M15 24l5 3-4 4 5 4-3 6M27 23l2 6-4 4 5 5M34 24l2 5-4 5 3 4" stroke="#aaa" fill="none"/><path d="M17 23l5 7M29 22l-3 7M34 29l-6 6M20 36l6 5" stroke="#fff" stroke-width="2"/><ellipse cx="26" cy="8.500" rx="17" ry="4.500" fill="#7a7f89" stroke="#e1e1e1" stroke-width="2.500"/></svg></div>
</footer>
</body>
</html>
```

FILE: styles.css
```css
* { box-sizing: border-box; }
body { margin: 0; width: 1366px; height: 768px; overflow: hidden; position: relative; display: flex; flex-direction: column; font-family: Roboto, "Liberation Sans", sans-serif; font-size: 14px; color: #202124; background: #fff; }
svg { display: block; flex: none; }
i { display: block; flex: none; }
p { margin: 0; }
.defs { position: absolute; }
.serif { font-family: "Liberation Serif", serif; }

.titlebar { height: 24px; flex: none; background: linear-gradient(#f7f5f3, #ddd5cd); display: flex; align-items: center; padding-left: 6px; color: #5a4f46; }
.wintitle { width: 460px; font: bold 14px/24px "Noto Sans", sans-serif; letter-spacing: 0.37px; white-space: nowrap; }
.tray { margin-left: auto; display: flex; align-items: center; width: 480px; white-space: nowrap; }
.t-gauge { margin-left: 10px; }
.t-wifi { margin-left: 10px; }
.t-lang { width: 20px; height: 20px; margin-left: 11px; border-radius: 2px; background: #7d7a78; color: #eee; font: 12px/20px "Liberation Serif", serif; text-align: center; }
.t-bt { margin-left: 15px; }
.t-mail { margin-left: 14px; }
.t-bat { margin-left: 11px; }
.t-text { font: 500 15px/24px "Noto Sans", sans-serif; color: #5a4f46; }
.t-pct { margin-left: 2px; width: 79px; letter-spacing: -0.2px; }
.t-vol { margin-left: 11px; }
.t-clock { margin-left: 17px; width: 60px; letter-spacing: -0.3px; }
.t-clock .serif { font-size: 17px; }
.t-power { margin-left: 7px; }
.t-user { font-size: 17px; margin-left: 3px; }

.tabstrip { height: 33px; flex: none; display: flex; background: #e0d7d0; }
.tab { width: 225px; background: #f4f3f1; border-right: 1px solid #a79c93; border-top: 1px solid #9d948c; box-shadow: inset 0 2px #f08661; display: flex; align-items: center; padding: 0 0 0 9px; }
.tablabel { margin-left: 6px; width: 165px; font-size: 16px; letter-spacing: -0.15px; color: #4d4b49; white-space: nowrap; overflow: hidden; -webkit-mask-image: linear-gradient(90deg, #000 135px, transparent 165px); mask-image: linear-gradient(90deg, #000 135px, transparent 165px); }
.tablabel b { font: 15px "Noto Sans", sans-serif; }
.tabx { margin-left: 6px; }
.newtab { flex: 1; border-bottom: 1px solid #a0958c; padding: 9px 0 0 9px; }

.navbar { height: 41px; flex: none; background: #f4f3f1; border-bottom: 1px solid #c6c4c2; display: flex; align-items: center; padding-left: 3px; }
.back { width: 34px; height: 34px; border: 1px solid #b4b1ae; border-radius: 50%; background: #fff; display: flex; align-items: center; justify-content: center; }
.fwd { margin-left: 8px; }
.reload { margin-left: 16px; }
.home { margin-left: 16px; }
.urlbar { margin-left: 71px; width: 674px; height: 30px; border: 1px solid #c3c1bf; border-radius: 4px; background: #fff; display: flex; align-items: center; padding-left: 8px; }
.urlsep { width: 1px; height: 22px; background: #ccc; margin: 0 8px; }
.perm { margin-left: 7px; }
.url { margin-left: 9px; width: 480px; padding-top: 2px; font-size: 16px; letter-spacing: 0.4px; color: #999; white-space: nowrap; overflow: hidden; -webkit-mask-image: linear-gradient(90deg, #000 455px, transparent 480px); mask-image: linear-gradient(90deg, #000 455px, transparent 480px); }
.url span { color: #333; }
.url em { font-style: normal; letter-spacing: -0.55px; }
.urldots { margin: 0 12px 0 34px; }
.bm { margin-left: 12px; }
.searchbar { margin-left: 10px; width: 251px; height: 30px; border: 1px solid #c3c1bf; border-radius: 4px; background: #fff; display: flex; align-items: center; padding-left: 8px; gap: 4px; font-size: 16px; letter-spacing: 0.3px; color: #888; }
.searchbar span { padding-top: 2px; }
.navicons { display: flex; align-items: center; gap: 16px; margin-left: 72px; }
.navicons svg:last-child { margin-left: 1px; }
.navsep { width: 1px; height: 34px; background: #d2d0ce; margin-left: 11px; }
.burger { margin-left: 15px; }

.ghead { height: 64px; flex: none; border-bottom: 1px solid #ececec; display: flex; align-items: center; }
.gmenu { margin-left: 27px; }
.glogo { margin-left: 21px; }
.gname { margin-left: 14px; width: 140px; font-size: 22px; color: #5f6368; }
.gsearch { width: 722px; height: 48px; border-radius: 8px; background: #f1f3f4; display: flex; align-items: center; padding-left: 17px; font-size: 16px; letter-spacing: 0.15px; color: #202124; fill: #5f6368; }
.gsearch span { margin-left: 16px; width: 580px; padding-top: 2px; }
.caret { width: 0; height: 0; border: 5px solid transparent; border-top-color: #5f6368; border-bottom: 0; }
.gsearch .caret { margin-left: 27px; }
.gicons { margin-left: 206px; display: flex; gap: 20px; fill: #5f6368; }
.account { margin-left: 20px; width: 32px; height: 32px; border-radius: 50%; background: #01579b; color: #fff; font: 500 17px/31px Roboto, sans-serif; text-align: center; }

.gmain { height: 542px; flex: none; display: flex; overflow: hidden; }
.rail { width: 72px; flex: none; fill: #757575; overflow: hidden; }
.plus { width: 56px; height: 56px; margin: 12px 0 12px 8px; border-radius: 50%; box-shadow: 0 1px 3px rgba(60,64,67,.45); display: flex; align-items: center; justify-content: center; }
.ri { width: 32px; height: 32px; margin-left: 20px; border-radius: 50%; display: flex; align-items: center; justify-content: center; position: relative; }
.ri.active { background: #e8eaed; fill: #666; }
.label { margin-left: 2px; }
.reddot { position: absolute; right: 0; top: 4px; width: 8px; height: 8px; border-radius: 50%; background: #c5221f; }
.rail hr { margin: 0; border: 0; height: 1px; background: #e5e7e9; }
.r1 { margin-top: 7px; }
.rail .h2 { margin-top: 7px; }
.r2 { margin-top: 8px; }
.signin { width: 33px; margin-left: 23px; overflow: hidden; }
.sigbtn { height: 32px; padding-left: 13px; border-radius: 2px 0 0 2px; background: #427fed; color: #fff; font: bold 13px/34px "DejaVu Sans", sans-serif; white-space: nowrap; }
.signin p { margin-top: 14px; font: 12px/14px "DejaVu Sans", sans-serif; color: #444; text-align: center; }

.list { width: 1238px; flex: none; display: flex; flex-direction: column; }
.ltools { height: 48px; flex: none; display: flex; align-items: center; color: #757575; fill: #757575; border-bottom: 1px solid #e9ebec; }
.c1 { margin-left: 18px; }
.caret.small { border-width: 4px 4px 0; border-top-color: #757575; margin-left: 8px; }
.c2 { margin-left: 26px; }
.c3 { margin-left: 20px; }
.count { margin-left: auto; width: 87px; font-size: 12px; letter-spacing: 0.3px; color: #5f6368; }
.prev { transform: scaleX(-1); color: #aaa; }
.next { margin: 0 36px 0 28px; color: #777; }
.lbody { flex: 1; display: flex; }
.rows { width: 1228px; height: 494px; overflow: hidden; background: #f3f7f8; }
.row { height: 40px; border-bottom: 1px solid #e0e4e6; display: flex; padding: 0 16px 0 18px; color: #cacdce; fill: #cacdce; line-height: 40px; letter-spacing: 0.2px; }
.row.tall { height: 80px; }
.k { width: 16px; height: 16px; margin-top: 12px; }
.s { width: 20px; height: 20px; margin: 10px 0 0 12px; }
.m { width: 16px; height: 16px; margin: 12px 0 0 12px; }
.from { margin-left: 12px; width: 200px; color: #dd4b39; }
.subj { flex: 1; color: #202124; white-space: nowrap; overflow: hidden; }
.subj span { color: #5f6368; }
.time { font-size: 12px; color: #5f6368; }
.chips { display: flex; gap: 8px; margin: -3px 0 0 2px; }
.chip { height: 30px; border: 1px solid #c8ced6; border-radius: 15px; display: flex; align-items: center; gap: 8px; padding-left: 11px; color: #5f6368; line-height: 28px; }
.w160 { width: 160px; }
.w116 { width: 116px; }
.scroll { width: 10px; background: #e0e0e0; }
.scroll i { height: 84px; background: #ef8d68; }
.side { width: 56px; border-left: 1px solid #e8e8e8; display: flex; flex-direction: column; align-items: center; padding: 20px 0 0 1px; color: #666; }
.side svg + svg { margin-top: 40px; }
.side svg:nth-child(3) { margin-top: 38px; }
.caltext { font: 9.500px Roboto, sans-serif; fill: #fff; text-anchor: middle; }
.sideline { width: 20px; height: 1px; background: #dadce0; margin: 34px 0 38px; }
.side .sidechev { margin: 274px 2px 0 0; }

.compose { position: absolute; left: 785px; top: 233px; width: 510px; height: 471px; background: #fff; border-radius: 8px 8px 0 0; box-shadow: 0 4px 14px rgba(0,0,0,.3); display: flex; flex-direction: column; padding: 0 16px; color: #777; }
.chead { height: 40px; flex: none; margin: 0 -16px; padding: 0 15px 0 16px; border-radius: 8px 8px 0 0; background: #404040; color: #cfcfcf; display: flex; align-items: center; gap: 14px; font-weight: 500; font-size: 14px; letter-spacing: 0.2px; }
.chead svg { margin-top: 2px; }
.chead span { flex: 1; }
.cto { height: 36px; flex: none; border-bottom: 1px solid #ececec; display: flex; align-items: center; }
.pill { margin-left: 4px; width: 145px; height: 20px; border: 1px solid #dadce0; border-radius: 10px; background: #f8f9fa; padding-left: 8px; display: flex; align-items: center; gap: 7px; font-size: 12px; font-weight: 500; letter-spacing: 0.35px; color: #5f6368; }
.cursor { width: 1px; height: 16px; background: #000; margin-left: 4px; }
.cc { margin-left: auto; padding-right: 5px; letter-spacing: 0.1px; }
.csub { height: 36px; flex: none; line-height: 36px; border-bottom: 1px solid #eceff1; }
.cbody { flex: 1; padding-top: 49px; font: 13px/19.500px "Liberation Sans", sans-serif; color: #222; }
.spell { padding-bottom: 1px; background: repeating-linear-gradient(90deg, #e04040 0 2px, transparent 2px 4px) 0 100% / 100% 1px no-repeat, repeating-linear-gradient(90deg, transparent 0 2px, #e04040 2px 4px) 0 calc(100% - 1px) / 100% 1px no-repeat; }
.cfoot { height: 61px; flex: none; display: flex; align-items: center; fill: #757575; }
.send { width: 97px; height: 36px; border-radius: 4px; background: #1a73e8; color: #fff; display: flex; font-weight: 500; line-height: 35px; letter-spacing: 0.5px; }
.send span { width: 72px; padding-left: 19px; }
.split { flex: 1; border-left: 1px solid #1557b0; padding: 16px 0 0 8px; }
.caret.white { border-width: 4px 4px 0; border-top-color: #fff; }
.ctools { display: flex; gap: 12px; margin-left: 12px; }
.ctools svg { width: 20px; height: 20px; }
.cdots { margin: 0 8px 0 77px; }

.card { position: absolute; left: 888px; top: 313px; width: 340px; height: 128px; background: #fff; border-radius: 4px; box-shadow: 0 3px 16px rgba(0,0,0,.35); }
.ctop { height: 81px; border-bottom: 1px solid #dadce0; padding: 18px 0 0 22px; display: flex; gap: 22px; }
.avatar { width: 48px; height: 48px; border-radius: 50%; background: #004d40; color: #fff; font-size: 25px; line-height: 50px; text-align: center; }
.cname { font-size: 22px; line-height: 30px; letter-spacing: 0.2px; }
.cmail { font-size: 12px; line-height: 18px; letter-spacing: 0.5px; color: #3c4043; }
.cact { height: 44px; display: flex; align-items: center; padding-left: 23px; gap: 16px; fill: #1a73e8; color: #1a73e8; font-weight: 500; letter-spacing: 0.4px; }
.cact span { width: 139px; padding-top: 4px; }
.cact svg { width: 24px; height: 24px; }
.cact .off { fill: #bdc1c6; }

.dlbadge { position: absolute; left: 1271px; top: 190px; width: 22px; height: 22px; background: linear-gradient(135deg, #506fae, #20427f); box-shadow: 0 2px 14px rgba(0,0,0,.2); padding: 3px; }

.dock { position: relative; height: 64px; flex: none; background: linear-gradient(#19233f, #253557 6px, #253659); padding: 6px; display: flex; justify-content: space-between; }
.doodles { position: absolute; right: 0; top: 0; }
.doodles.left { left: 0; right: auto; }
.tiles { display: flex; gap: 7px; }
.tile { position: relative; width: 52px; height: 52px; border-radius: 4px; border: 1px solid rgba(200,210,230,.28); background: linear-gradient(rgba(190,200,220,.38), rgba(110,130,170,.2) 55%); }
.tile svg { width: 52px; height: 52px; margin: -1px; }
.dash { background: linear-gradient(#506099, #3d5592); }
.red { background: linear-gradient(#c68c7b, #b15b40 55%); }
.gold { background: linear-gradient(#c2b27c, #a8913a 55%); }
.lt { background: linear-gradient(#c4c5cb, #9d9ea7); }
.wine { background: linear-gradient(#a37580, #8d3d4b 55%); }
.grey { background: linear-gradient(#c4c5c1, #a4a69f); }
.dark { background: linear-gradient(#777, #3f3f3f 50%); border: 1px solid #c98b45; }
.run::after, .red::after, .gold::after { content: ""; position: absolute; left: 20px; bottom: -7px; border: 4px solid transparent; border-top: 0; border-bottom: 5px solid #ddd; }
.red::before { content: ""; position: absolute; left: 20px; top: -7px; border: 4px solid transparent; border-bottom: 0; border-top: 5px solid #ddd; }
```
